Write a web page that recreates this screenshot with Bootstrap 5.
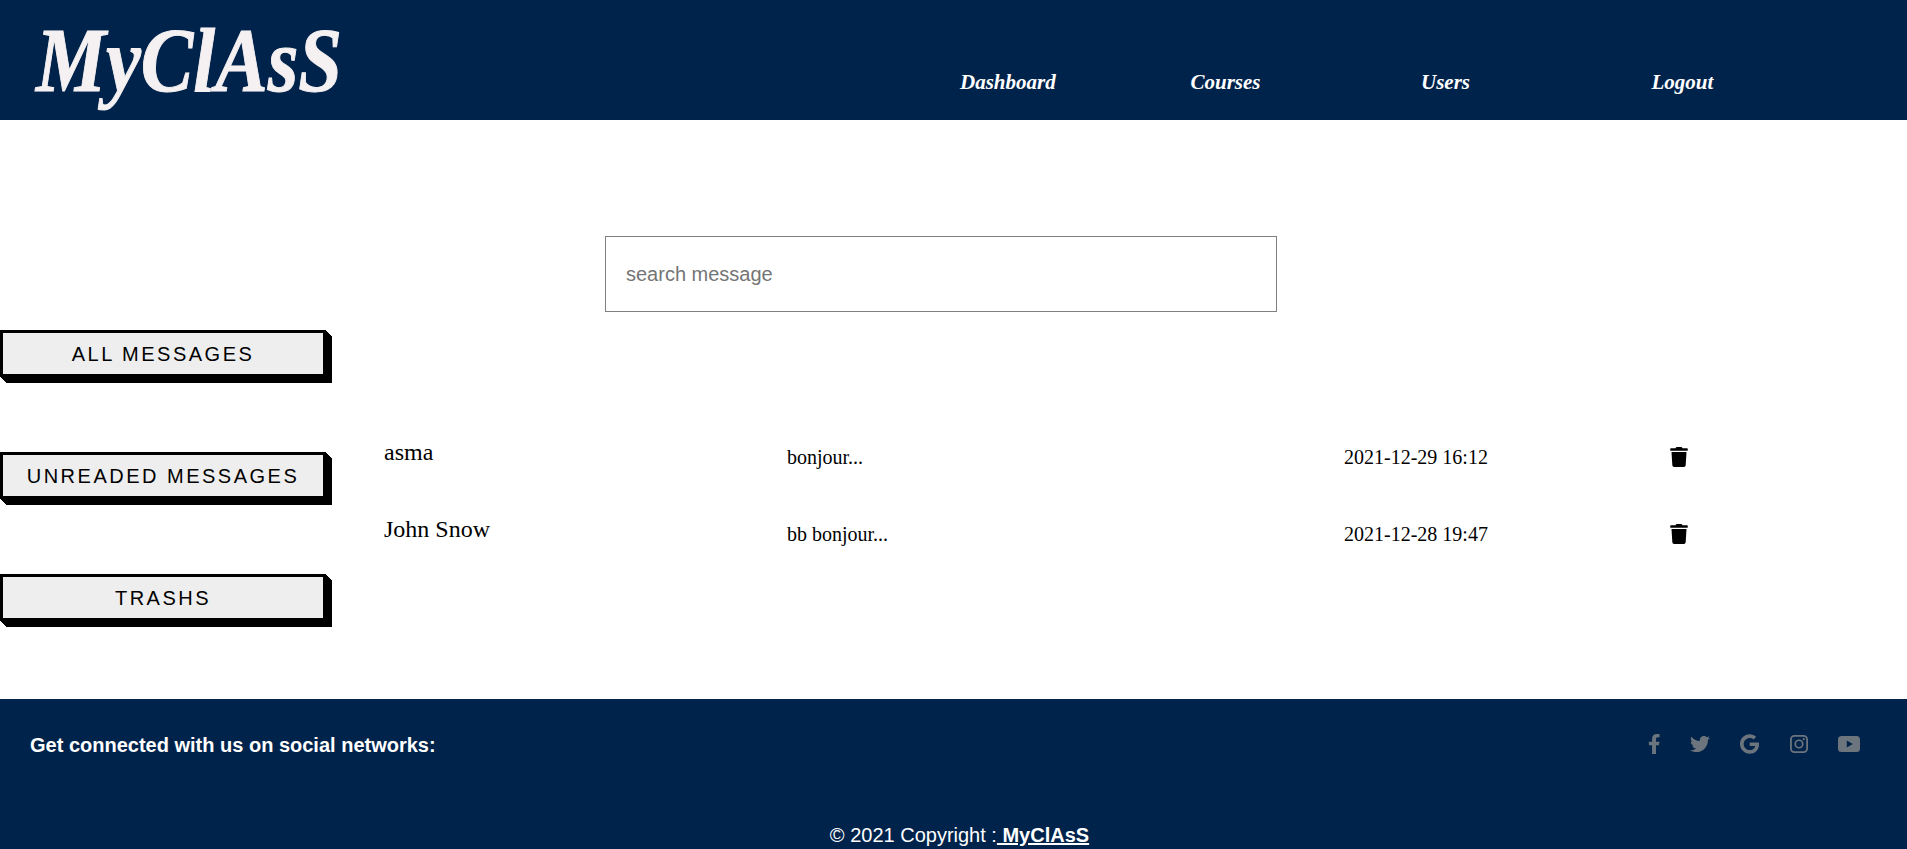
<!DOCTYPE html>
<html lang="en">
<head>
    <meta charset="UTF-8">
    <meta name="viewport" content="width=device-width, initial-scale=1.0">
    <title>MyClAsS</title>
    <link href="https://cdn.jsdelivr.net/npm/bootstrap@5.3.0/dist/css/bootstrap.min.css" rel="stylesheet">
    <style>
        body {
            font-family: "Liberation Serif", serif;
            color: #000;
            background: #fff;
        }
        .top-bar {
            background: #00234b;
            height: 120px;
        }
        .brand-logo {
            font-family: "Liberation Serif", serif;
            font-weight: 700;
            font-style: italic;
            font-size: 92px;
            line-height: 120px;
            color: #f5f1f2;
            margin-left: 36px;
            text-decoration: none;
            transform: scaleX(.855);
            transform-origin: left center;
            -webkit-text-stroke: 1px #f5f1f2;
        }
        .top-links {
            margin-right: 25px;
            padding-top: 62px;
        }
        .top-links a {
            display: block;
            width: 230.5px;
            font-size: 21px;
            font-weight: 700;
            font-style: italic;
            line-height: 40px;
            color: #fff;
            text-decoration: none;
        }
        .page-body {
            height: 579px;
            padding-top: 116px;
        }
        .search-bar {
            padding-right: 25px;
        }
        .search-field {
            width: 672px;
            height: 76px;
            padding: 0 20px;
            border: 1px solid #808080;
            font-family: "Liberation Sans", sans-serif;
            font-size: 20px;
            outline: none;
        }
        .search-field::placeholder {
            color: #757575;
        }
        .side-menu {
            width: 332px;
            margin-top: 18px;
            gap: 75px;
        }
        .side-btn {
            width: 326px;
            height: 47px;
            padding: 0;
            border: 3px solid #000;
            background: #eee;
            color: #000;
            font-family: "Liberation Sans", sans-serif;
            font-size: 20px;
            letter-spacing: 2.5px;
            box-shadow: 1px 1px 0 #000, 2px 2px 0 #000, 3px 3px 0 #000, 4px 4px 0 #000, 5px 5px 0 #000, 6px 6px 0 #000;
        }
        .msg-list {
            padding-top: 106px;
            padding-left: 52px;
        }
        .msg-row {
            height: 77px;
            font-size: 20px;
        }
        .msg-name {
            width: 403px;
            font-size: 24px;
            position: relative;
            top: -5px;
        }
        .msg-text {
            width: 557px;
        }
        .msg-date {
            width: 326px;
        }
        .bin-icon {
            width: 18px;
            height: 20px;
            fill: #000;
        }
        .site-footer {
            background: #00234b;
            color: #fff;
            font-family: "Liberation Sans", sans-serif;
            font-size: 20px;
            height: 150px;
        }
        .social-row {
            padding: 31px 47px 0 30px;
            height: 122px;
        }
        .social-icons {
            gap: 29.5px;
            margin-top: 4px;
        }
        .social-icons svg {
            height: 20px;
            fill: #6c757d;
            display: block;
        }
        .copy-line {
            line-height: 28px;
            padding-left: 12px;
        }
        .copy-line a {
            color: #fff;
            font-weight: 700;
        }
    </style>
</head>
<body>
    <header class="top-bar d-flex justify-content-between">
        <a class="brand-logo" href="#">MyClAsS</a>
        <nav class="top-links d-flex">
            <a href="#">Dashboard</a>
            <a href="#">Courses</a>
            <a href="#">Users</a>
            <a href="#">Logout</a>
        </nav>
    </header>

    <main class="page-body">
        <div class="search-bar d-flex justify-content-center">
            <input class="search-field" type="text" placeholder="search message">
        </div>
        <div class="d-flex">
            <div class="side-menu d-flex flex-column flex-shrink-0">
                <button class="side-btn" type="button">ALL MESSAGES</button>
                <button class="side-btn" type="button">UNREADED MESSAGES</button>
                <button class="side-btn" type="button">TRASHS</button>
            </div>
            <div class="msg-list flex-grow-1">
                <div class="msg-row d-flex align-items-center">
                    <div class="msg-name">asma</div>
                    <div class="msg-text">bonjour...</div>
                    <div class="msg-date">2021-12-29 16:12</div>
                    <svg class="bin-icon" viewBox="0 0 448 512"><path d="M432 32H312l-9.4-18.7A24 24 0 0 0 281.1 0H166.8a23.72 23.72 0 0 0-21.4 13.3L136 32H16A16 16 0 0 0 0 48v32a16 16 0 0 0 16 16h416a16 16 0 0 0 16-16V48a16 16 0 0 0-16-16zM53.2 467a48 48 0 0 0 47.9 45h245.8a48 48 0 0 0 47.9-45L416 128H32z"/></svg>
                </div>
                <div class="msg-row d-flex align-items-center">
                    <div class="msg-name">John Snow</div>
                    <div class="msg-text">bb bonjour...</div>
                    <div class="msg-date">2021-12-28 19:47</div>
                    <svg class="bin-icon" viewBox="0 0 448 512"><path d="M432 32H312l-9.4-18.7A24 24 0 0 0 281.1 0H166.8a23.72 23.72 0 0 0-21.4 13.3L136 32H16A16 16 0 0 0 0 48v32a16 16 0 0 0 16 16h416a16 16 0 0 0 16-16V48a16 16 0 0 0-16-16zM53.2 467a48 48 0 0 0 47.9 45h245.8a48 48 0 0 0 47.9-45L416 128H32z"/></svg>
                </div>
            </div>
        </div>
    </main>

    <footer class="site-footer">
        <div class="social-row d-flex justify-content-between align-items-start">
            <strong>Get connected with us on social networks:</strong>
            <div class="social-icons d-flex align-items-center">
                <svg viewBox="0 0 320 512"><path d="M279.14 288l14.22-92.66h-88.91v-60.13c0-25.35 12.42-50.06 52.24-50.06h40.42V6.26S260.43 0 225.36 0c-73.22 0-121.08 44.38-121.08 124.72v70.62H22.89V288h81.39v224h100.17V288z"/></svg>
                <svg viewBox="0 0 512 512"><path d="M459.37 151.716c.325 4.548.325 9.097.325 13.645 0 138.72-105.583 298.558-298.558 298.558-59.452 0-114.68-17.219-161.137-47.106 8.447.974 16.568 1.299 25.34 1.299 49.055 0 94.213-16.568 130.274-44.832-46.132-.975-84.792-31.188-98.112-72.772 6.498.974 12.995 1.624 19.818 1.624 9.421 0 18.843-1.3 27.614-3.573-48.081-9.747-84.143-51.98-84.143-102.985v-1.299c13.969 7.797 30.214 12.67 47.431 13.319-28.264-18.843-46.781-51.005-46.781-87.391 0-19.492 5.197-37.36 14.294-52.954 51.655 63.675 129.3 105.258 216.365 109.807-1.624-7.797-2.599-15.918-2.599-24.04 0-57.828 46.782-104.934 104.934-104.934 30.213 0 57.502 12.67 76.67 33.137 23.715-4.548 46.456-13.32 66.599-25.34-7.798 24.366-24.366 44.833-46.132 57.827 21.117-2.273 41.584-8.122 60.426-16.243-14.292 20.791-32.161 39.308-52.628 54.253z"/></svg>
                <svg viewBox="0 0 488 512"><path d="M488 261.8C488 403.3 391.1 504 248 504 110.8 504 0 393.2 0 256S110.8 8 248 8c66.8 0 123 24.5 166.3 64.9l-67.5 64.9C258.5 52.6 94.3 116.6 94.3 256c0 86.5 69.1 156.6 153.7 156.6 98.2 0 135-70.4 140.8-106.9H248v-85.3h236.1c2.3 12.7 3.9 24.9 3.9 41.4z"/></svg>
                <svg viewBox="0 0 20 20"><path fill-rule="evenodd" d="M5.5 1h9A4.5 4.5 0 0 1 19 5.500v9a4.500 4.500 0 0 1-4.500 4.500h-9A4.500 4.500 0 0 1 1 14.500v-9A4.500 4.500 0 0 1 5.500 1zm0 1.800A2.700 2.700 0 0 0 2.800 5.500v9a2.700 2.700 0 0 0 2.700 2.700h9a2.700 2.700 0 0 0 2.700-2.700v-9a2.700 2.700 0 0 0-2.700-2.700zM10 5.400a4.600 4.600 0 1 1 0 9.200 4.600 4.600 0 0 1 0-9.200zm0 1.700a2.900 2.900 0 1 0 0 5.800 2.900 2.900 0 0 0 0-5.800zM14.800 4.100a1.100 1.100 0 1 1 0 2.200 1.100 1.100 0 0 1 0-2.200z"/></svg>
                <svg viewBox="0 0 22 20"><path fill-rule="evenodd" d="M3.500 2h15A3.500 3.500 0 0 1 22 5.500v9a3.500 3.500 0 0 1-3.500 3.500h-15A3.500 3.500 0 0 1 0 14.500v-9A3.500 3.500 0 0 1 3.500 2zM8.800 6.500v7l6-3.500z"/></svg>
            </div>
        </div>
        <div class="copy-line text-center">© 2021 Copyright :<a href="#"> MyClAsS</a></div>
    </footer>

    <script src="https://cdn.jsdelivr.net/npm/bootstrap@5.3.0/dist/js/bootstrap.bundle.min.js"></script>
</body>
</html>
